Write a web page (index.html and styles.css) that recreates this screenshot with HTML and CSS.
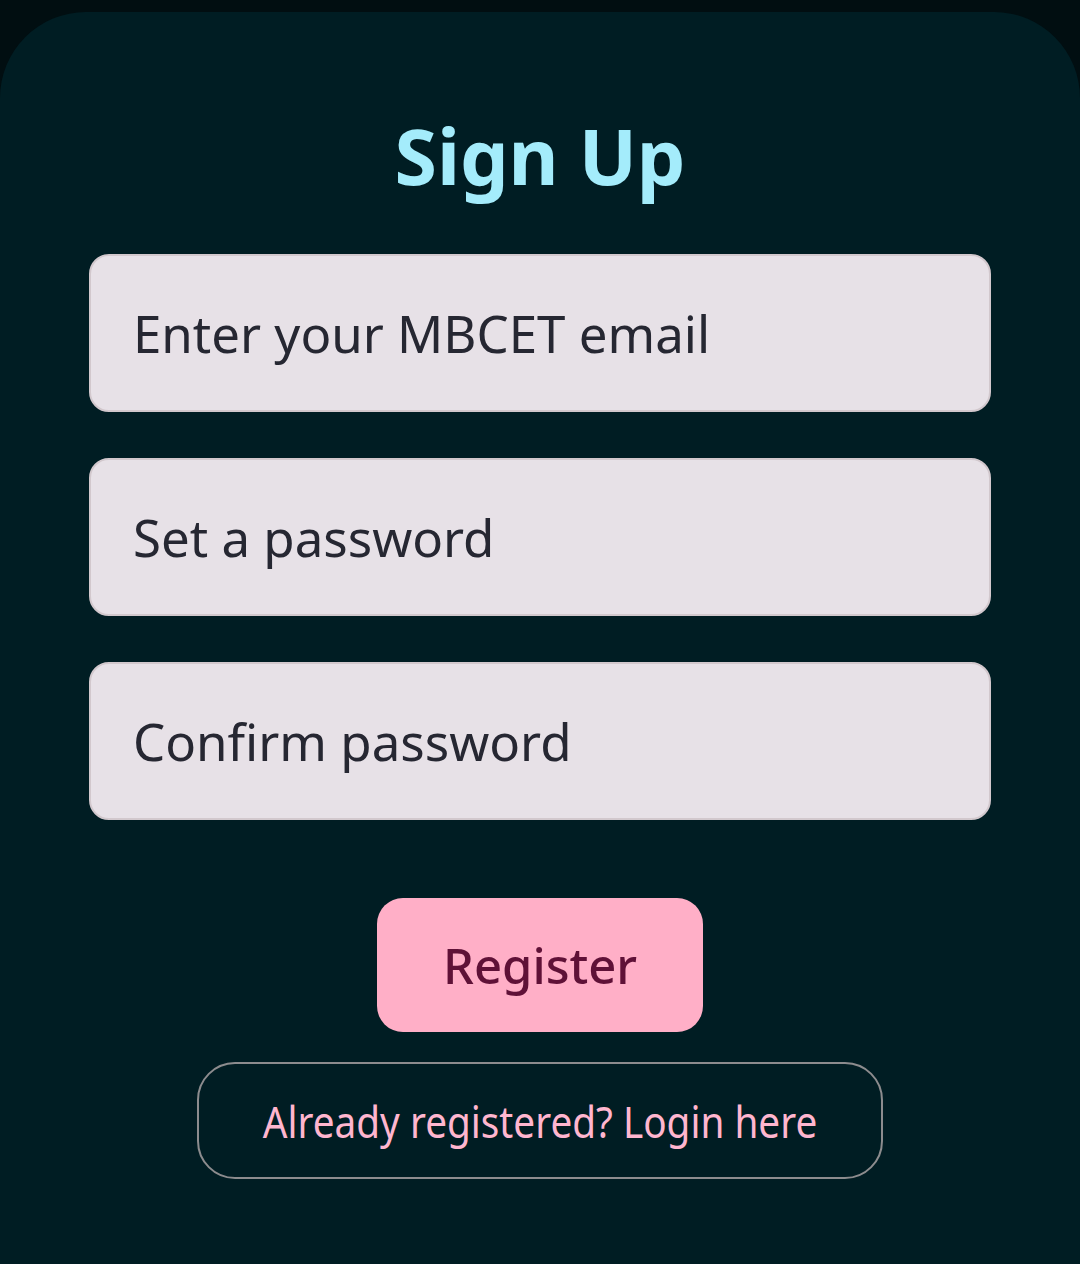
FILE: index.html
```html
<!DOCTYPE html>
<html>
<head>
<meta charset="utf-8">
<link rel="stylesheet" href="styles.css">
</head>
<body>
<main class="card">
  <h1 class="title">Sign Up</h1>
  <form class="form">
    <input class="field" type="email" placeholder="Enter your MBCET email">
    <input class="field" type="password" placeholder="Set a password">
    <input class="field" type="password" placeholder="Confirm password">
    <button class="register" type="button">Register</button>
    <button class="login" type="button"><span class="login-text">Already registered? Login here</span></button>
  </form>
</main>
</body>
</html>
```

FILE: styles.css
```css
* { box-sizing: border-box; }
html, body {
  margin: 0;
  height: 100%;
  background: #010e11;
  font-family: "Noto Sans", "Open Sans", sans-serif;
}
body {
  padding-top: 12px;
  overflow: hidden;
}
.card {
  background: #001d23;
  border-radius: 86px 86px 0 0;
  height: 1252px;
  display: flex;
  flex-direction: column;
  align-items: center;
  padding-top: 89px;
}
.title {
  margin: 0;
  font-size: 77px;
  font-weight: 700;
  line-height: 110px;
  color: #a4ecfb;
}
.form {
  display: flex;
  flex-direction: column;
  align-items: center;
  width: 902px;
  margin-top: 43px;
}
.field {
  width: 902px;
  height: 158px;
  margin-bottom: 46px;
  border: 2px solid #d2c8cd;
  border-radius: 20px;
  background: #e7e1e7;
  padding: 0 0 0 42px;
  font-family: inherit;
  font-size: 51px;
  color: #262732;
  outline: none;
}
.field::placeholder { color: #262732; opacity: 1; }
.field:nth-of-type(3) { margin-bottom: 78px; }
.register {
  width: 326px;
  height: 134px;
  border: none;
  border-radius: 26px;
  background: #ffafc7;
  color: #5f1137;
  font-family: inherit;
  font-size: 49px;
  font-weight: 500;
  padding: 0;
}
.login {
  margin-top: 30px;
  width: 686px;
  height: 117px;
  border: 2px solid #8c8c8e;
  border-radius: 38px;
  background: transparent;
  color: #ffb6cf;
  font-family: inherit;
  font-size: 44px;
  padding: 0;
  display: flex;
  align-items: center;
  justify-content: center;
}
.login-text {
  display: inline-block;
  white-space: nowrap;
  transform: scaleX(0.88);
}
```
